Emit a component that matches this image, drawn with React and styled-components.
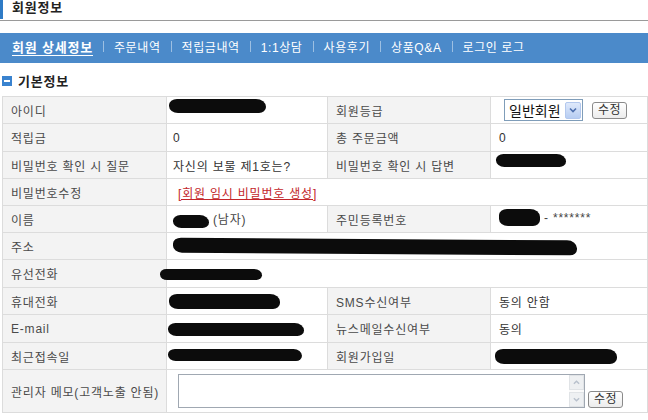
import React from "react";
import styled, { createGlobalStyle } from "styled-components";

const GlobalStyle = createGlobalStyle`
  body {
    margin: 0;
    background: #fff;
    overflow: hidden;
    font-family: "Liberation Sans", "Noto Sans CJK KR", sans-serif;
    font-size: 12px;
    letter-spacing: 0.8px;
    color: #333;
  }
`;

const Page = styled.div`
  width: 648px;
  overflow: hidden;
`;

const TitleBar = styled.div`
  display: flex;
  align-items: flex-start;
  height: 20px;
  border-bottom: 1px solid #9a9a9a;
`;

const TitleMark = styled.span`
  width: 3px;
  height: 19px;
  background: #2f7bc6;
`;

const Title = styled.h1`
  margin: 0 0 0 9px;
  font-size: 13px;
  line-height: 16px;
  font-weight: bold;
  color: #222;
`;

const Nav = styled.nav`
  display: flex;
  align-items: center;
  height: 30px;
  margin-top: 12px;
  padding: 0 0 3px 12px;
  box-sizing: border-box;
  background: #4b8aca;
`;

const NavItem = styled.a`
  color: #fff;
  font-size: ${(p) => (p.$active ? "13px" : "12px")};
  font-weight: ${(p) => (p.$active ? "bold" : "normal")};
  letter-spacing: ${(p) => (p.$active ? "0.8px" : "0.6px")};
  text-decoration: ${(p) => (p.$active ? "underline" : "none")};
  text-underline-offset: 3px;
  white-space: nowrap;
`;

const NavSep = styled.span`
  width: 1px;
  height: 11px;
  margin: 0 10px;
  background: rgba(255, 255, 255, 0.45);
`;

const Section = styled.div`
  display: flex;
  align-items: center;
  gap: 6px;
  height: 33px;
  padding: 2px 0 0 2px;
  box-sizing: border-box;
`;

const MinusBox = styled.span`
  display: flex;
  align-items: center;
  justify-content: center;
  width: 10px;
  height: 10px;
  background: #3a83cf;
  &::after {
    content: "";
    width: 6px;
    height: 2px;
    background: #fff;
  }
`;

const SectionTitle = styled.h2`
  margin: 0;
  font-size: 13px;
  font-weight: bold;
  color: #222;
`;

const Table = styled.table`
  margin-left: 2px;
  width: 646px;
  border-collapse: collapse;
  table-layout: fixed;
`;

const Row = styled.tr`
  height: ${(p) => p.$h || 27}px;
`;

const Label = styled.th`
  padding: 0 0 0 8px;
  text-align: left;
  font-weight: normal;
  color: #4a4a4a;
  background: #f3f3f3;
  border: 1px solid #dcdcdc;
  white-space: nowrap;
`;

const Cell = styled.td`
  padding: 0 0 0 ${(p) => p.$pad ?? 6}px;
  color: #333;
  background: #fff;
  border: 1px solid #dcdcdc;
  white-space: nowrap;
`;

const Scribble = styled.span`
  display: inline-block;
  vertical-align: middle;
  width: ${(p) => p.$w}px;
  height: ${(p) => p.$hh || 14}px;
  margin-left: ${(p) => p.$ml || 0}px;
  border-radius: 8px 10px 7px 9px / 6px 8px 6px 7px;
  background: #0c0c0c;
  transform: translateY(${(p) => p.$dy || 0}px) rotate(${(p) => p.$rot || 0}deg);
`;

const Muted = styled.span`
  margin-left: 4px;
  color: #444;
`;

const TempLink = styled.a`
  color: #c3262a;
  text-decoration: underline;
`;

const Inline = styled.div`
  display: flex;
  align-items: center;
  gap: 9px;
`;

const Select = styled.div`
  display: flex;
  align-items: center;
  justify-content: space-between;
  width: 79px;
  height: 22px;
  padding: 0 1px 0 4px;
  box-sizing: border-box;
  border: 1px solid #7f9db9;
  background: #fff;
  font-size: 14px;
  letter-spacing: 0;
  color: #111;
`;

const DropButton = styled.span`
  display: flex;
  align-items: center;
  justify-content: center;
  width: 16px;
  height: 17px;
  border-radius: 2px;
  background: linear-gradient(#dfe9fb, #b7cdf2);
  border: 1px solid #b3c8ee;
  box-sizing: border-box;
`;

const SmallButton = styled.button`
  height: 17px;
  padding: 0 5px;
  border: 1px solid #8a8a8a;
  border-radius: 3px;
  background: linear-gradient(#ffffff, #ececec);
  font-family: inherit;
  font-size: 12px;
  letter-spacing: 0.5px;
  line-height: 13px;
  color: #333;
`;

const MemoWrap = styled.div`
  display: flex;
  align-items: flex-end;
  gap: 3px;
  padding: 4px 0;
`;

const Memo = styled.div`
  display: flex;
  justify-content: flex-end;
  width: 407px;
  height: 34px;
  border: 1px solid #a0a8b2;
  box-sizing: border-box;
  background: #fff;
`;

const ScrollTrack = styled.div`
  display: flex;
  flex-direction: column;
  justify-content: space-between;
  width: 15px;
  background: #fafafa;
`;

const ScrollArrow = styled.span`
  display: flex;
  align-items: center;
  justify-content: center;
  height: 15px;
  background: #eef0f2;
  border: 1px solid #e0e3e6;
  box-sizing: border-box;
`;

const Chevron = ({ up, color = "#4d6185", size = 8 }) => (
  <svg width={size} height={size} viewBox="0 0 8 8">
    <path
      d={up ? "M1 5.5 L4 2.5 L7 5.5" : "M1 2.5 L4 5.5 L7 2.5"}
      fill="none"
      stroke={color}
      strokeWidth="1.6"
    />
  </svg>
);

const navItems = ["주문내역", "적립금내역", "1:1상담", "사용후기", "상품Q&A", "로그인 로그"];

export default function App() {
  return (
    <Page>
      <GlobalStyle />
      <TitleBar>
        <TitleMark />
        <Title>회원정보</Title>
      </TitleBar>

      <Nav>
        <NavItem $active>회원 상세정보</NavItem>
        {navItems.map((item) => (
          <React.Fragment key={item}>
            <NavSep />
            <NavItem>{item}</NavItem>
          </React.Fragment>
        ))}
      </Nav>

      <Section>
        <MinusBox />
        <SectionTitle>기본정보</SectionTitle>
      </Section>

      <Table>
        <colgroup>
          <col style={{ width: 164 }} />
          <col style={{ width: 161 }} />
          <col style={{ width: 163 }} />
          <col />
        </colgroup>
        <tbody>
          <Row>
            <Label>아이디</Label>
            <Cell $pad={2}>
              <Scribble $w={97} $dy={-4} />
            </Cell>
            <Label>회원등급</Label>
            <Cell $pad={13}>
              <Inline>
                <Select>
                  일반회원
                  <DropButton>
                    <Chevron color="#4d6fae" />
                  </DropButton>
                </Select>
                <SmallButton>수정</SmallButton>
              </Inline>
            </Cell>
          </Row>
          <Row $h={28}>
            <Label>적립금</Label>
            <Cell>0</Cell>
            <Label>총 주문금액</Label>
            <Cell $pad={8}>0</Cell>
          </Row>
          <Row>
            <Label>비밀번호 확인 시 질문</Label>
            <Cell>자신의 보물 제1호는?</Cell>
            <Label>비밀번호 확인 시 답변</Label>
            <Cell $pad={5}>
              <Scribble $w={70} $dy={-5} $hh={13} />
            </Cell>
          </Row>
          <Row>
            <Label>비밀번호수정</Label>
            <Cell colSpan={3} $pad={11}>
              <TempLink>[회원 임시 비밀번호 생성]</TempLink>
            </Cell>
          </Row>
          <Row>
            <Label>이름</Label>
            <Cell>
              <Scribble $w={36} $hh={13} />
              <Muted>(남자)</Muted>
            </Cell>
            <Label>주민등록번호</Label>
            <Cell $pad={8}>
              <Scribble $w={41} $hh={17} $dy={-2} />
              <Muted>- *******</Muted>
            </Cell>
          </Row>
          <Row>
            <Label>주소</Label>
            <Cell colSpan={3}>
              <Scribble $w={404} $hh={15} $rot={0.4} />
            </Cell>
          </Row>
          <Row $h={28}>
            <Label>유선전화</Label>
            <Cell colSpan={3}>
              <Scribble $w={102} $hh={11} $ml={-13} />
            </Cell>
          </Row>
          <Row>
            <Label>휴대전화</Label>
            <Cell $pad={2}>
              <Scribble $w={111} $hh={15} />
            </Cell>
            <Label>SMS수신여부</Label>
            <Cell $pad={8}>동의 안함</Cell>
          </Row>
          <Row $h={28}>
            <Label>E-mail</Label>
            <Cell $pad={1}>
              <Scribble $w={136} $hh={13} />
            </Cell>
            <Label>뉴스메일수신여부</Label>
            <Cell $pad={8}>동의</Cell>
          </Row>
          <Row>
            <Label>최근접속일</Label>
            <Cell $pad={1}>
              <Scribble $w={134} $hh={12} $dy={-2} />
            </Cell>
            <Label>회원가입일</Label>
            <Cell $pad={4}>
              <Scribble $w={122} $hh={15} />
            </Cell>
          </Row>
          <Row $h={43}>
            <Label>관리자 메모(고객노출 안됨)</Label>
            <Cell colSpan={3} $pad={11}>
              <MemoWrap>
                <Memo>
                  <ScrollTrack>
                    <ScrollArrow>
                      <Chevron up color="#b8c0cc" size={7} />
                    </ScrollArrow>
                    <ScrollArrow>
                      <Chevron color="#b8c0cc" size={7} />
                    </ScrollArrow>
                  </ScrollTrack>
                </Memo>
                <SmallButton>수정</SmallButton>
              </MemoWrap>
            </Cell>
          </Row>
        </tbody>
      </Table>
    </Page>
  );
}
